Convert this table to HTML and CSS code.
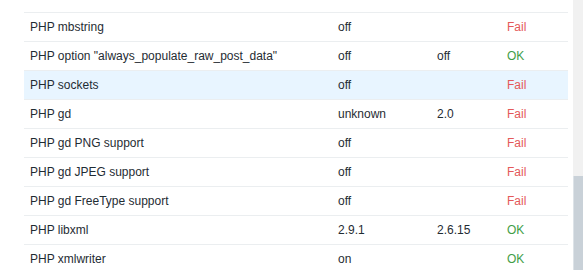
FILE: index.html
```html
<!DOCTYPE html>
<html>
<head>
<meta charset="utf-8">
<link rel="stylesheet" href="styles.css">
</head>
<body>
<div class="page">
  <div class="table">
    <div class="row"><div>PHP mbstring</div><div>off</div><div></div><div class="fail">Fail</div></div>
    <div class="row"><div>PHP option "always_populate_raw_post_data"</div><div>off</div><div>off</div><div class="ok">OK</div></div>
    <div class="row hover"><div>PHP sockets</div><div>off</div><div></div><div class="fail">Fail</div></div>
    <div class="row"><div>PHP gd</div><div>unknown</div><div>2.0</div><div class="fail">Fail</div></div>
    <div class="row"><div>PHP gd PNG support</div><div>off</div><div></div><div class="fail">Fail</div></div>
    <div class="row"><div>PHP gd JPEG support</div><div>off</div><div></div><div class="fail">Fail</div></div>
    <div class="row"><div>PHP gd FreeType support</div><div>off</div><div></div><div class="fail">Fail</div></div>
    <div class="row"><div>PHP libxml</div><div>2.9.1</div><div>2.6.15</div><div class="ok">OK</div></div>
    <div class="row"><div>PHP xmlwriter</div><div>on</div><div></div><div class="ok">OK</div></div>
  </div>
  <div class="scrollbar"><div class="thumb"></div></div>
</div>
</body>
</html>
```
FILE: styles.css
```css
html, body {
  margin: 0;
  padding: 0;
  background: #ffffff;
  overflow: hidden;
}
.page {
  display: flex;
  height: 270px;
  padding-left: 24px;
  font-family: "Liberation Sans", Arial, sans-serif;
  font-size: 12px;
  color: #1f2c33;
}
.table {
  width: 544px;
  padding-top: 12px;
}
.row {
  display: grid;
  grid-template-columns: 308px 99px 70px 1fr;
  height: 28px;
  border-top: 1px solid #ebeef0;
  align-items: center;
}
.row > div {
  padding-left: 6px;
  white-space: nowrap;
}
.row.hover {
  background: #e8f5ff;
}
.fail { color: #e45959; }
.ok { color: #429e47; }
.scrollbar {
  margin-left: 5px;
  width: 10px;
  background: #f1f1f1;
  display: flex;
  flex-direction: column;
  padding-top: 176px;
}
.thumb {
  flex: 1;
  background: #c9d1d8;
  border-left: 1px solid #dde3e8;
}
```
